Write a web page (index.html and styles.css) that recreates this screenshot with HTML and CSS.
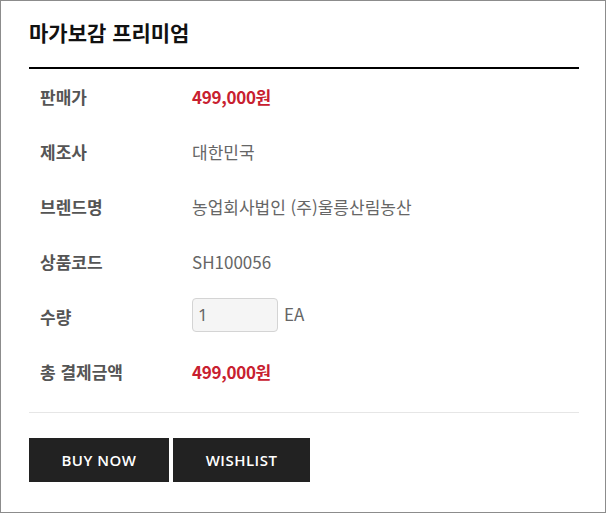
FILE: index.html
```html
<!DOCTYPE html>
<html lang="ko">
<head>
  <meta charset="UTF-8">
  <title>마가보감 프리미엄</title>
  <meta name="viewport" content="width=device-width, initial-scale=1.0">
  <link rel="stylesheet" href="styles.css">
</head>
<body>

  <div class="product-box">
    <h2 class="product-title">마가보감 프리미엄</h2>

    <div class="info-list">
      <div class="info-row">
        <div class="info-label">판매가</div>
        <div class="info-value price">499,000원</div>
      </div>
      <div class="info-row">
        <div class="info-label">제조사</div>
        <div class="info-value">대한민국</div>
      </div>
      <div class="info-row">
        <div class="info-label">브렌드명</div>
        <div class="info-value">농업회사법인 (주)울릉산림농산</div>
      </div>
      <div class="info-row">
        <div class="info-label">상품코드</div>
        <div class="info-value">SH100056</div>
      </div>
      <div class="info-row">
        <div class="info-label">수량</div>
        <div class="info-value qty">
          <input type="text" class="qty-input" value="1">
          <span class="qty-unit">EA</span>
        </div>
      </div>
      <div class="info-row">
        <div class="info-label">총 결제금액</div>
        <div class="info-value price">499,000원</div>
      </div>
    </div>

    <div class="button-row">
      <button class="btn">BUY NOW</button>
      <button class="btn">WISHLIST</button>
    </div>
  </div>

</body>
</html>
```

FILE: styles.css
```css
body {
  margin: 0;
  font-family: "Noto Sans CJK KR", "Noto Sans", sans-serif;
  background-color: #fff;
}

.product-box {
  box-sizing: border-box;
  width: 606px;
  height: 513px;
  border: 1px solid #8c8c8c;
  padding: 0 26px 0 28px;
}

.product-title {
  margin: 0;
  padding: 16px 0 20px 0;
  font-size: 21px;
  line-height: 30px;
  font-weight: bold;
  color: #111;
  border-bottom: 2px solid #000;
}

.info-list {
  padding-bottom: 13px;
  border-bottom: 1px solid #e6e6e6;
}

.info-row {
  display: flex;
  align-items: center;
  height: 55px;
}

.info-label {
  width: 163px;
  padding-left: 11px;
  box-sizing: border-box;
  font-size: 17px;
  font-weight: bold;
  color: #555;
}

.info-value {
  font-size: 17px;
  color: #666;
}

.info-value.price {
  color: #c8202f;
  font-weight: bold;
  letter-spacing: -0.3px;
}

.qty {
  display: flex;
  align-items: center;
  gap: 6px;
  margin-top: -4px;
}

.qty-input {
  width: 86px;
  height: 34px;
  box-sizing: border-box;
  border: 1px solid #d4d4d4;
  border-radius: 4px;
  background-color: #f5f5f5;
  padding: 0 5px;
  font-family: "Noto Sans", sans-serif;
  font-size: 17px;
  color: #666;
}

.qty-unit {
  margin-top: -2px;
}

.button-row {
  display: flex;
  gap: 4px;
  margin-top: 25px;
}

.btn {
  width: 140px;
  height: 44px;
  border: none;
  background-color: #222;
  color: #fff;
  font-family: "Open Sans", sans-serif;
  font-size: 15px;
  font-weight: 600;
  letter-spacing: 0.5px;
  cursor: pointer;
}

.btn + .btn {
  width: 137px;
}
```
